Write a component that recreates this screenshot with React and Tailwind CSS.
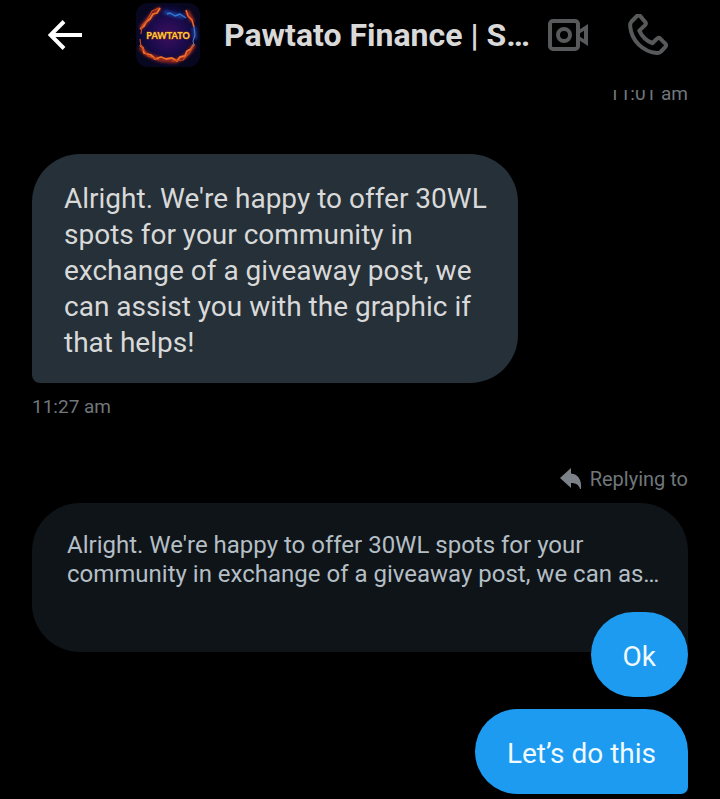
function BackArrow() {
  return (
    <svg viewBox="0 0 36 32" className="h-8 w-9" fill="none" stroke="#fff" strokeWidth="4" aria-hidden="true">
      <path d="M16 2.500 2.500 16 16 29.500M2.500 16H34" />
    </svg>
  );
}

function VideoIcon() {
  return (
    <svg viewBox="0 0 40 32" className="h-8 w-10" aria-hidden="true">
      <rect x="2" y="2" width="28" height="28" rx="3" fill="none" stroke="#57595a" strokeWidth="4" />
      <circle cx="16" cy="16" r="6" fill="none" stroke="#57595a" strokeWidth="4" />
      <path fillRule="evenodd" fill="#57595a" d="M30 11.500 40 5v22l-10-6.500zM36 11.800l-4 2.500v3.400l4 2.500z" />
    </svg>
  );
}

function PhoneIcon() {
  return (
    <svg viewBox="0 1 40 42" className="h-[42px] w-10" fill="none" stroke="#57595a" strokeWidth="4" strokeLinejoin="round" aria-hidden="true">
      <path d="M9 3 3.500 8.500C2.200 10 2 11.500 2.200 13.500C3.500 28 15 38.500 28.500 40C30.500 40.200 31.800 39.800 33 38.500L37.200 34.200C38.300 33 38.300 31.800 37.300 30.700L32.500 25.800C31.300 24.700 30 24.700 28.900 25.800L24.300 30.200C18.500 27.800 14 23.500 11.300 17.600L16.800 12.400C18 11.200 18.100 9.900 17 8.700L12.300 3.100C11.300 2 10.100 1.900 9 3Z" />
    </svg>
  );
}

function Avatar() {
  return (
    <svg viewBox="0 0 64 64" className="h-16 w-16 shrink-0 rounded-xl" role="img" aria-label="Pawtato Finance">
      <defs>
        <radialGradient id="night">
          <stop offset="0" stopColor="#3d105c" />
          <stop offset=".5" stopColor="#200b50" />
          <stop offset=".8" stopColor="#0e0a3c" />
          <stop offset="1" stopColor="#070720" />
        </radialGradient>
        <filter id="glow" x="-20%" y="-20%" width="140%" height="140%">
          <feGaussianBlur stdDeviation="1.6" />
        </filter>
        <filter id="soft" x="-20%" y="-20%" width="140%" height="140%">
          <feGaussianBlur stdDeviation=".45" />
        </filter>
      </defs>
      <rect width="64" height="64" fill="url(#night)" />
      <g fill="none" strokeLinejoin="round">
        <g filter="url(#glow)" strokeWidth="4">
          <path stroke="#a52b12" d="M24 5 17 11 11 18 5 25M4 44 10 51 17 54 26 57 40 58 48 54 54 48 58 42M51 8 57 19" />
          <path stroke="#183e9c" d="M28 9 36 11 48 14M58 24 59 36" />
        </g>
        <g filter="url(#soft)">
          <path stroke="#f2702c" strokeWidth="1.800" d="m24 5-3 5-4 1-3 5-4 3-2 4-4 3M4 42l3 3 1 5 7 2 4 4 6-2 5 2 6-1 5 3 3-4 5-1 2-5 4-2 3-5" />
          <path stroke="#c5481f" strokeWidth="1.200" d="m23 5-7 3-5 9-5 6-1 8M4 36l1 7 7 10 11 4M36 58l11-1 7-8 4-8" />
          <path stroke="#3277c9" strokeWidth="1.400" d="m31 11 3-1 5 3 5-2 6 4" />
          <path stroke="#ed672a" strokeWidth="1.600" d="m50 7 2 6 4 4 2 7" />
          <path stroke="#6078b0" strokeWidth="1" d="m58 24 1 8-2 6 1 5" />
        </g>
      </g>
      <text x="32" y="36" textAnchor="middle" fill="#ffca3a" stroke="#7a2a20" strokeWidth="1" paintOrder="stroke" fontFamily="Lato, sans-serif" fontWeight="900" fontSize="9">PAWTATO</text>
    </svg>
  );
}

function ReplyIcon() {
  return (
    <svg viewBox="0 0 22 22" className="h-[22px] w-[22px]" fill="#7c8288" aria-hidden="true">
      <path d="M0 10 11 0v5.500C18 6 22 12 21 21h-1c-1-4-4-6-9-6v5z" />
    </svg>
  );
}

export default function App() {
  return (
    <div className="flex h-screen flex-col overflow-hidden bg-black font-['Roboto','Noto_Sans',sans-serif] text-[#d9d9d9]">
      <header className="flex h-[90px] shrink-0 items-start pt-[3px] pr-[52px] pl-12">
        <button type="button" aria-label="Back" className="mr-13 flex h-16 shrink-0 items-center">
          <BackArrow />
        </button>
        <Avatar />
        <h1 className="ml-6 min-w-0 flex-1 truncate text-[32px] leading-16 font-bold">Pawtato Finance | Support</h1>
        <div className="ml-4 flex h-16 shrink-0 items-center gap-10">
          <button type="button" aria-label="Video call"><VideoIcon /></button>
          <button type="button" aria-label="Voice call"><PhoneIcon /></button>
        </div>
      </header>

      <main className="flex min-h-0 flex-1 flex-col justify-end overflow-hidden px-8 pb-[5px]">
        <time className="self-end text-[19px] leading-6 text-[#71767b]">11:01 am</time>

        <p className="mt-12 max-w-[486px] self-start rounded-[48px] rounded-bl-lg bg-[#253038] pt-[27px] pr-7 pb-[22px] pl-8 text-[28px] leading-9">
          Alright. We're happy to offer 30WL spots for your community in exchange of a giveaway post, we can assist you with the graphic if that helps!
        </p>
        <time className="mt-3 text-[19px] leading-6 text-[#71767b]">11:27 am</time>

        <div className="mt-12 flex items-center gap-2 self-end text-xl leading-6 text-[#71767b]">
          <ReplyIcon />
          <span>Replying to</span>
        </div>
        <blockquote className="mt-3 rounded-[48px] rounded-br-none bg-[#0f1418] pt-7 pr-5 pb-[63px] pl-[35px] text-2xl leading-[29px] text-[#b4bec5]">
          Alright. We're happy to offer 30WL spots for your community in exchange of a giveaway post, we can as…
        </blockquote>
        <p className="z-10 -mt-10 self-end rounded-[48px] bg-[#1d9bf0] px-8 pt-[27px] pb-[22px] text-[28px] leading-9 text-[#f0faff]">Ok</p>
        <p className="mt-3 self-end rounded-[48px] rounded-br-lg bg-[#1d9bf0] px-8 pt-[27px] pb-[22px] text-[28px] leading-9 text-[#f0faff]">Let’s do this</p>
      </main>
    </div>
  );
}
